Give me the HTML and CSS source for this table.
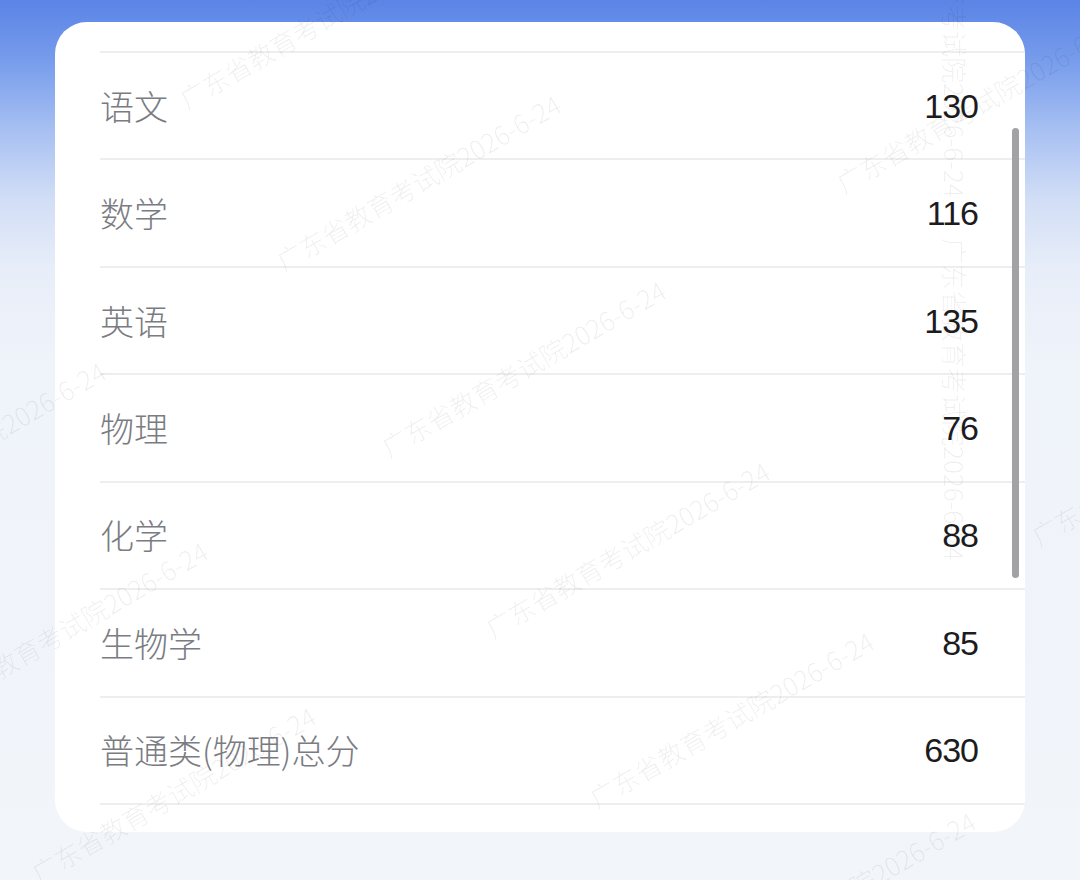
FILE: index.html
```html
<!DOCTYPE html>
<html lang="zh-CN">
<head>
<meta charset="utf-8">
<title>成绩</title>
<link rel="stylesheet" href="styles.css">
</head>
<body>
<div class="page">
  <div class="card">
    <div class="list">
      <div class="row"><span class="label">语文</span><span class="value">130</span></div>
      <div class="row"><span class="label">数学</span><span class="value">116</span></div>
      <div class="row"><span class="label">英语</span><span class="value">135</span></div>
      <div class="row"><span class="label">物理</span><span class="value">76</span></div>
      <div class="row"><span class="label">化学</span><span class="value">88</span></div>
      <div class="row"><span class="label">生物学</span><span class="value">85</span></div>
      <div class="row"><span class="label">普通类(物理)总分</span><span class="value">630</span></div>
    </div>
    <div class="scrollbar"></div>
  </div>
  <div class="wm-layer">
    <span class="wm" style="left:188px;top:86px">广东省教育考试院2026-6-24</span>
    <span class="wm" style="left:285px;top:248px">广东省教育考试院2026-6-24</span>
    <span class="wm" style="left:390px;top:434px">广东省教育考试院2026-6-24</span>
    <span class="wm" style="left:494px;top:615px">广东省教育考试院2026-6-24</span>
    <span class="wm" style="left:598px;top:785px">广东省教育考试院2026-6-24</span>
    <span class="wm" style="left:-275px;top:345px">广东省教育考试院2026-6-24</span>
    <span class="wm" style="left:-170px;top:515px">广东省教育考试院2026-6-24</span>
    <span class="wm" style="left:-68px;top:695px">广东省教育考试院2026-6-24</span>
    <span class="wm" style="left:40px;top:860px">广东省教育考试院2026-6-24</span>
    <span class="wm" style="left:845px;top:170px">广东省教育考试院2026-6-24</span>
    <span class="wm" style="left:1040px;top:523px">广东省教育考试院2026-6-24</span>
    <span class="wm" style="left:700px;top:965px">广东省教育考试院2026-6-24</span>
    <span class="wm v" style="left:968px;top:-125px">广东省教育考试院2026-6-24</span>
    <span class="wm v" style="left:968px;top:238px">广东省教育考试院2026-6-24</span>
  </div>
</div>
</body>
</html>
```
FILE: styles.css
```css
html, body {
  margin: 0;
  padding: 0;
}

body {
  width: 1080px;
  height: 880px;
  overflow: hidden;
  font-family: "Noto Sans CJK SC", "Noto Sans", sans-serif;
}

.page {
  position: relative;
  width: 1080px;
  height: 880px;
  padding-top: 22px;
  box-sizing: border-box;
  background: linear-gradient(180deg,
    #5a84e6 0px,
    #779cec 60px,
    #a7c0f2 130px,
    #d2def6 200px,
    #e8eef9 270px,
    #eff3fa 360px,
    #f2f6fb 880px);
}

.card {
  position: relative;
  margin-left: 55px;
  width: 970px;
  height: 810px;
  padding-top: 29px;
  box-sizing: border-box;
  background: #ffffff;
  border-radius: 32px;
  overflow: hidden;
}

.list {
  margin-left: 45px;
  border-top: 2px solid #eeeeee;
}

.row {
  display: flex;
  align-items: center;
  justify-content: space-between;
  height: 107.43px;
  box-sizing: border-box;
  padding-right: 47px;
  border-bottom: 2px solid #eeeeee;
}

.label {
  font-size: 34px;
  font-weight: 300;
  color: #7a7c82;
  line-height: 1;
}

.value {
  font-family: "Liberation Sans", Arial, sans-serif;
  font-size: 34px;
  letter-spacing: -1px;
  color: #1c1c1e;
  line-height: 1;
}

.scrollbar {
  position: absolute;
  right: 6px;
  top: 106px;
  width: 7px;
  height: 450px;
  border-radius: 4px;
  background: #a2a2a4;
}

.wm-layer {
  position: absolute;
  inset: 0;
  overflow: hidden;
  pointer-events: none;
}

.wm {
  position: absolute;
  white-space: nowrap;
  font-size: 26px;
  font-weight: 300;
  line-height: 26px;
  color: rgba(0, 0, 0, 0.07);
  transform-origin: 0 100%;
  transform: rotate(-30deg);
}

.wm.v {
  transform-origin: 0 0;
  transform: rotate(90deg);
}
```
